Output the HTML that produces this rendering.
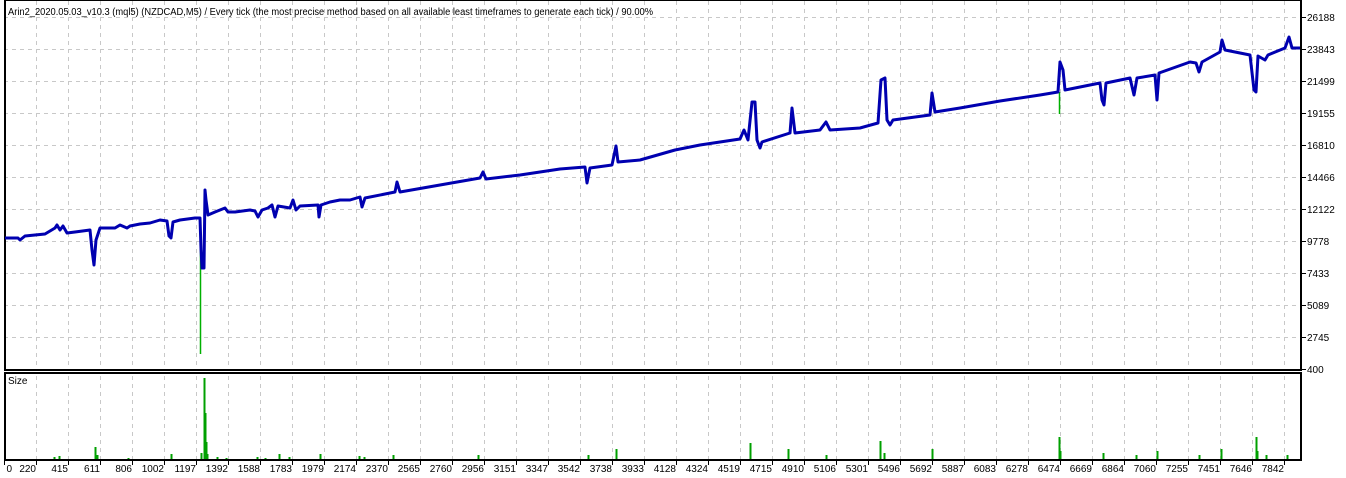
<!DOCTYPE html>
<html><head><meta charset="utf-8"><style>
html,body{margin:0;padding:0;background:#fff;}
svg{display:block;font-family:"Liberation Sans",sans-serif;font-size:10px;}
</style></head><body>
<svg width="1346" height="478" viewBox="0 0 1346 478" xmlns="http://www.w3.org/2000/svg">
<defs>
<pattern id="g1" x="4" y="17" width="32" height="32" patternUnits="userSpaceOnUse">
<line x1="0.5" y1="0" x2="0.5" y2="32" stroke="#c8c8c8" stroke-width="1" stroke-dasharray="4,4"/>
<line x1="0" y1="0.5" x2="32" y2="0.5" stroke="#c8c8c8" stroke-width="1" stroke-dasharray="4,4"/>
</pattern>
<pattern id="g2" x="4" y="0" width="32" height="32" patternUnits="userSpaceOnUse">
<line x1="0.5" y1="0" x2="0.5" y2="32" stroke="#c8c8c8" stroke-width="1" stroke-dasharray="4,4"/>
</pattern>
<pattern id="tk" x="4" y="0" width="32" height="32" patternUnits="userSpaceOnUse">
<line x1="0.5" y1="0" x2="0.5" y2="32" stroke="#000" stroke-width="1"/>
</pattern>
<pattern id="tky" x="0" y="17" width="32" height="32" patternUnits="userSpaceOnUse">
<line x1="0" y1="0.5" x2="32" y2="0.5" stroke="#000" stroke-width="1"/>
</pattern>
</defs>
<rect width="1346" height="478" fill="#fff"/>
<rect x="6" y="1" width="1294" height="368" fill="url(#g1)"/>
<rect x="6" y="374" width="1294" height="85" fill="url(#g2)"/>
<rect x="4" y="461" width="1282" height="4" fill="url(#tk)"/>
<rect x="1302" y="17" width="4" height="354" fill="url(#tky)"/>
<g stroke="#000" stroke-width="2" fill="none">
<rect x="5" y="0" width="1296" height="370"/>
<rect x="5" y="373" width="1296" height="87"/>
</g>
<g stroke="#00b000" stroke-width="1.5" fill="none">
<line x1="200.5" y1="218" x2="200.5" y2="354"/>
<line x1="1059.5" y1="92" x2="1059.5" y2="114"/>
</g>
<polyline fill="none" stroke="#0000b0" stroke-width="3" stroke-linejoin="round" points="
5,238 18,238 20,240 25,236 35,235 45,234 55,228 57,225 60,230 63,226 67,233 75,232 90,230 92,250 94,265 96,240 100,228 115,228 120,225 127,228 130,226 140,224 150,223
160,220 167,221 169,236 171,238 173,222 180,220 195,218 200,218 201,249 202,268 204,268 205,190 206,200 208,215 215,212 220,210 225,208 228,212 235,212 250,210 255,211 258,217 262,210 268,208 272,205 275,217 278,206 290,208 293,200 296,210 300,206 318,205 319,217 321,205 330,202 340,200
350,200 360,197 362,207 365,198 395,192 397,182 400,192 440,185 480,178 483,172 486,179 520,175 560,169
585,167 587,183 590,168 612,165 616,146 618,162 640,160 675,150 700,145 720,142 740,139 744,130 748,140 752,102 755,102 757,140 760,148 762,142 790,133 792,108 795,133 820,130 826,122 830,130 860,128 878,123 881,80 885,78 887,120 890,125 893,120 930,115 932,93 935,112 960,108
1000,101 1040,95 1058,92 1060,62 1063,70 1065,90 1100,83 1102,100 1104,105 1106,83 1130,78 1134,95 1137,78 1155,75 1157,100 1159,73 1190,62 1196,63 1199,72 1202,62 1220,52 1222,40 1225,50 1250,55 1254,90 1256,92 1258,56 1265,60 1268,55 1285,48 1289,37 1292,48 1300,48"/>
<path stroke="#00a000" stroke-width="2" fill="none" d="M54.5 459v-2M59.5 459v-3M95.5 459v-12M97.5 459v-4M128.5 459v-1M171.5 459v-5M201.5 459v-6M204.5 459v-81M205.5 459v-46M206.5 459v-17M207.5 459v-5M217.5 459v-2M226.5 459v-1M257.5 459v-2M265.5 459v-1M279.5 459v-5M289.5 459v-2M320.5 459v-5M359.5 459v-3M364.5 459v-2M393.5 459v-4M478.5 459v-4M588.5 459v-4M616.5 459v-10M750.5 459v-16M788.5 459v-10M826.5 459v-4M880.5 459v-18M884.5 459v-6M932.5 459v-10M1059.5 459v-22M1060.5 459v-8M1103.5 459v-6M1136.5 459v-4M1157.5 459v-8M1199.5 459v-4M1221.5 459v-10M1256.5 459v-22M1257.5 459v-8M1266.5 459v-4M1287.5 459v-4"/>
<text x="8" y="15" fill="#000" textLength="645" lengthAdjust="spacingAndGlyphs">Arin2_2020.05.03_v10.3 (mql5) (NZDCAD,M5) / Every tick (the most precise method based on all available least timeframes to generate each tick) / 90.00%</text>
<text x="8" y="384" fill="#000">Size</text>
<g fill="#000">
<text x="1307" y="21">26188</text><text x="1307" y="53">23843</text><text x="1307" y="85">21499</text><text x="1307" y="117">19155</text><text x="1307" y="149">16810</text><text x="1307" y="181">14466</text><text x="1307" y="213">12122</text><text x="1307" y="245">9778</text><text x="1307" y="277">7433</text><text x="1307" y="309">5089</text><text x="1307" y="341">2745</text><text x="1307" y="373">400</text>
</g>
<g fill="#000" text-anchor="end">
<text x="12" y="472">0</text><text x="36" y="472">220</text><text x="68" y="472">415</text><text x="100" y="472">611</text><text x="132" y="472">806</text><text x="164" y="472">1002</text><text x="196" y="472">1197</text><text x="228" y="472">1392</text><text x="260" y="472">1588</text><text x="292" y="472">1783</text><text x="324" y="472">1979</text><text x="356" y="472">2174</text><text x="388" y="472">2370</text><text x="420" y="472">2565</text><text x="452" y="472">2760</text><text x="484" y="472">2956</text><text x="516" y="472">3151</text><text x="548" y="472">3347</text><text x="580" y="472">3542</text><text x="612" y="472">3738</text><text x="644" y="472">3933</text><text x="676" y="472">4128</text><text x="708" y="472">4324</text><text x="740" y="472">4519</text><text x="772" y="472">4715</text><text x="804" y="472">4910</text><text x="836" y="472">5106</text><text x="868" y="472">5301</text><text x="900" y="472">5496</text><text x="932" y="472">5692</text><text x="964" y="472">5887</text><text x="996" y="472">6083</text><text x="1028" y="472">6278</text><text x="1060" y="472">6474</text><text x="1092" y="472">6669</text><text x="1124" y="472">6864</text><text x="1156" y="472">7060</text><text x="1188" y="472">7255</text><text x="1220" y="472">7451</text><text x="1252" y="472">7646</text><text x="1284" y="472">7842</text>
</g>
</svg>
</body></html>
